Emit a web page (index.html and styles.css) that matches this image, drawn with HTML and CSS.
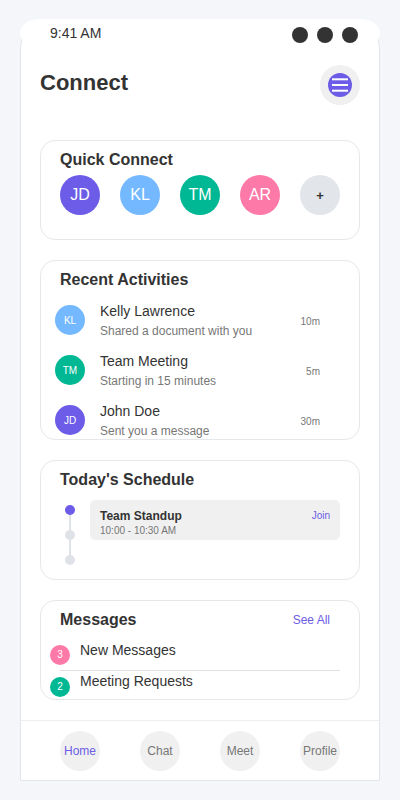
FILE: index.html
```html
<!DOCTYPE html>
<html lang="en">
<head>
<meta charset="utf-8">
<title>Connect</title>
<link rel="stylesheet" href="styles.css">
</head>
<body>
<div class="phone">
  <div class="status">
    <span class="status-time">9:41 AM</span>
    <div class="status-dots"><span></span><span></span><span></span></div>
  </div>
  <header class="app-header">
    <h1 class="app-title">Connect</h1>
    <button class="menu-btn" aria-label="Menu">
      <svg width="24" height="24" viewBox="0 0 24 24">
        <circle cx="12" cy="12" r="12" fill="#6c5ce7"/>
        <rect x="4" y="5.3" width="16" height="2" fill="#fff"/>
        <rect x="4" y="11" width="16" height="2" fill="#fff"/>
        <rect x="4" y="16.7" width="16" height="2" fill="#fff"/>
      </svg>
    </button>
  </header>
  <main class="content">
    <section class="card card-quick">
      <h2 class="card-title">Quick Connect</h2>
      <div class="quick-row">
        <span class="avatar av-purple">JD</span>
        <span class="avatar av-blue">KL</span>
        <span class="avatar av-green">TM</span>
        <span class="avatar av-pink">AR</span>
        <span class="avatar av-add">+</span>
      </div>
    </section>

    <section class="card card-recent">
      <h2 class="card-title">Recent Activities</h2>
      <div class="activity">
        <span class="act-avatar av-blue">KL</span>
        <div class="act-text">
          <div class="act-name">Kelly Lawrence</div>
          <div class="act-sub">Shared a document with you</div>
        </div>
        <span class="act-time">10m</span>
      </div>
      <div class="activity">
        <span class="act-avatar av-green">TM</span>
        <div class="act-text">
          <div class="act-name">Team Meeting</div>
          <div class="act-sub">Starting in 15 minutes</div>
        </div>
        <span class="act-time">5m</span>
      </div>
      <div class="activity">
        <span class="act-avatar av-purple">JD</span>
        <div class="act-text">
          <div class="act-name">John Doe</div>
          <div class="act-sub">Sent you a message</div>
        </div>
        <span class="act-time">30m</span>
      </div>
    </section>

    <section class="card card-schedule">
      <h2 class="card-title title-gap">Today's Schedule</h2>
      <div class="schedule">
        <div class="timeline">
          <span class="tl-dot tl-active"></span>
          <span class="tl-dot"></span>
          <span class="tl-dot"></span>
        </div>
        <div class="event">
          <div class="event-info">
            <div class="event-name">Team Standup</div>
            <div class="event-time">10:00 - 10:30 AM</div>
          </div>
          <span class="event-join">Join</span>
        </div>
      </div>
    </section>

    <section class="card card-messages">
      <div class="msg-head">
        <h2 class="card-title">Messages</h2>
        <span class="see-all">See All</span>
      </div>
      <div class="msg-item msg-divider">
        <span class="badge av-pink">3</span>
        New Messages
      </div>
      <div class="msg-item">
        <span class="badge av-green">2</span>
        Meeting Requests
      </div>
    </section>
  </main>
  <nav class="bottom-nav">
    <span class="nav-item nav-active">Home</span>
    <span class="nav-item">Chat</span>
    <span class="nav-item">Meet</span>
    <span class="nav-item">Profile</span>
  </nav>
</div>
</body>
</html>
```

FILE: styles.css
```css
* { box-sizing: border-box; }

html, body {
  margin: 0;
  padding: 0;
  background: #f5f6fa;
  font-family: "Liberation Sans", Arial, sans-serif;
  color: #333;
}

.phone {
  width: 360px;
  margin: 19px auto 0;
  background: #fff;
  border: 1px solid #e3e5ea;
  border-radius: 30px 30px 0 0;
}

.status {
  height: 28px;
  margin: -1px -1px 0;
  background: #fff;
  border-radius: 20px / 14px;
  display: flex;
  align-items: center;
  justify-content: space-between;
  padding: 1px 22px 0 30px;
}

.status-time {
  font-size: 14px;
  color: #333;
  margin-top: -2px;
}

.status-dots {
  display: flex;
  gap: 9px;
  margin-top: 2px;
}

.status-dots span {
  width: 16px;
  height: 16px;
  border-radius: 50%;
  background: #333;
}

.app-header {
  display: flex;
  justify-content: space-between;
  align-items: flex-start;
  padding: 18px 19px 15px 19px;
}

.app-title {
  margin: 5px 0 0;
  font-size: 22px;
  font-weight: bold;
  color: #333;
  line-height: normal;
}

.menu-btn {
  width: 40px;
  height: 40px;
  border: none;
  border-radius: 50%;
  background: #f0f0f0;
  padding: 0;
  display: flex;
  align-items: center;
  justify-content: center;
}

.menu-btn svg { display: block; }

.content {
  padding: 20px 19px;
  display: flex;
  flex-direction: column;
  gap: 20px;
}

.card {
  border: 1px solid #e6e7eb;
  border-radius: 15px;
  padding: 10px 19px;
  background: #fff;
  overflow: hidden;
}

.card-quick { height: 100px; }
.card-recent { height: 180px; }
.card-schedule { height: 120px; }
.card-messages { height: 100px; }

.card-title {
  margin: 0 0 6px;
  font-size: 16px;
  font-weight: bold;
  line-height: 18px;
  color: #333;
}

.title-gap { margin-bottom: 11px; }

.quick-row {
  display: flex;
  gap: 20px;
}

.avatar {
  width: 40px;
  height: 40px;
  border-radius: 50%;
  display: flex;
  align-items: center;
  justify-content: center;
  color: #fff;
  font-size: 16px;
  flex: none;
}

.av-purple { background: #6c5ce7; }
.av-blue { background: #74b9ff; }
.av-green { background: #00b894; }
.av-pink { background: #fd79a8; }
.av-add { background: #e2e5e9; color: #333; font-size: 13px; font-weight: bold; }

.activity {
  height: 50px;
  display: flex;
  align-items: center;
}

.act-avatar {
  width: 30px;
  height: 30px;
  border-radius: 50%;
  margin-left: -5px;
  display: flex;
  align-items: center;
  justify-content: center;
  color: #fff;
  font-size: 10px;
  flex: none;
}

.act-text {
  margin-left: 15px;
  flex: 1;
}

.act-name {
  font-size: 14px;
  line-height: 16px;
  color: #333;
}

.act-sub {
  margin-top: 5px;
  font-size: 12px;
  line-height: 14px;
  color: #777;
}

.act-time {
  font-size: 10px;
  color: #777;
  margin-right: 20px;
  padding-top: 3px;
}

.schedule {
  display: flex;
  gap: 10px;
}

.timeline {
  width: 20px;
  padding-top: 5px;
  display: flex;
  flex-direction: column;
  align-items: center;
  gap: 15px;
  position: relative;
}

.timeline::before {
  content: "";
  position: absolute;
  left: 9px;
  top: 10px;
  width: 2px;
  height: 50px;
  background: #dfe2e6;
}

.tl-dot {
  width: 10px;
  height: 10px;
  border-radius: 50%;
  background: #dfe2e6;
  position: relative;
}

.tl-active { background: #6c5ce7; }

.event {
  flex: 1;
  height: 40px;
  background: #f0f0f0;
  border-radius: 5px;
  padding: 9px 10px 0;
  display: flex;
  justify-content: space-between;
  align-items: flex-start;
}

.event-name {
  font-size: 12px;
  font-weight: bold;
  line-height: 14px;
  color: #333;
}

.event-time {
  margin-top: 2px;
  font-size: 10px;
  line-height: 11.5px;
  color: #777;
}

.event-join {
  font-size: 10px;
  line-height: 14px;
  color: #6c5ce7;
}

.msg-head {
  display: flex;
  justify-content: space-between;
  align-items: center;
  margin-bottom: 11px;
}

.msg-head .card-title { margin: 0; }

.see-all {
  font-size: 12px;
  line-height: 14px;
  color: #6c5ce7;
  margin-right: 10px;
}

.msg-item {
  position: relative;
  height: 31px;
  padding: 2px 0 0 20px;
  font-size: 14px;
  line-height: 16px;
  color: #333;
}

.msg-divider { border-bottom: 1px solid #e0e0e0; }

.badge {
  position: absolute;
  left: -10px;
  top: 50%;
  transform: translateY(-50%);
  width: 20px;
  height: 20px;
  border-radius: 50%;
  display: flex;
  align-items: center;
  justify-content: center;
  color: #fff;
  font-size: 10px;
}

.bottom-nav {
  border-top: 1px solid #eceef1;
  height: 60px;
  display: flex;
  justify-content: center;
  align-items: center;
  gap: 40px;
}

.nav-item {
  width: 40px;
  height: 40px;
  border-radius: 50%;
  background: #f0f0f0;
  display: flex;
  align-items: center;
  justify-content: center;
  font-size: 12px;
  color: #777;
  white-space: nowrap;
}

.nav-active { color: #6c5ce7; }
```
